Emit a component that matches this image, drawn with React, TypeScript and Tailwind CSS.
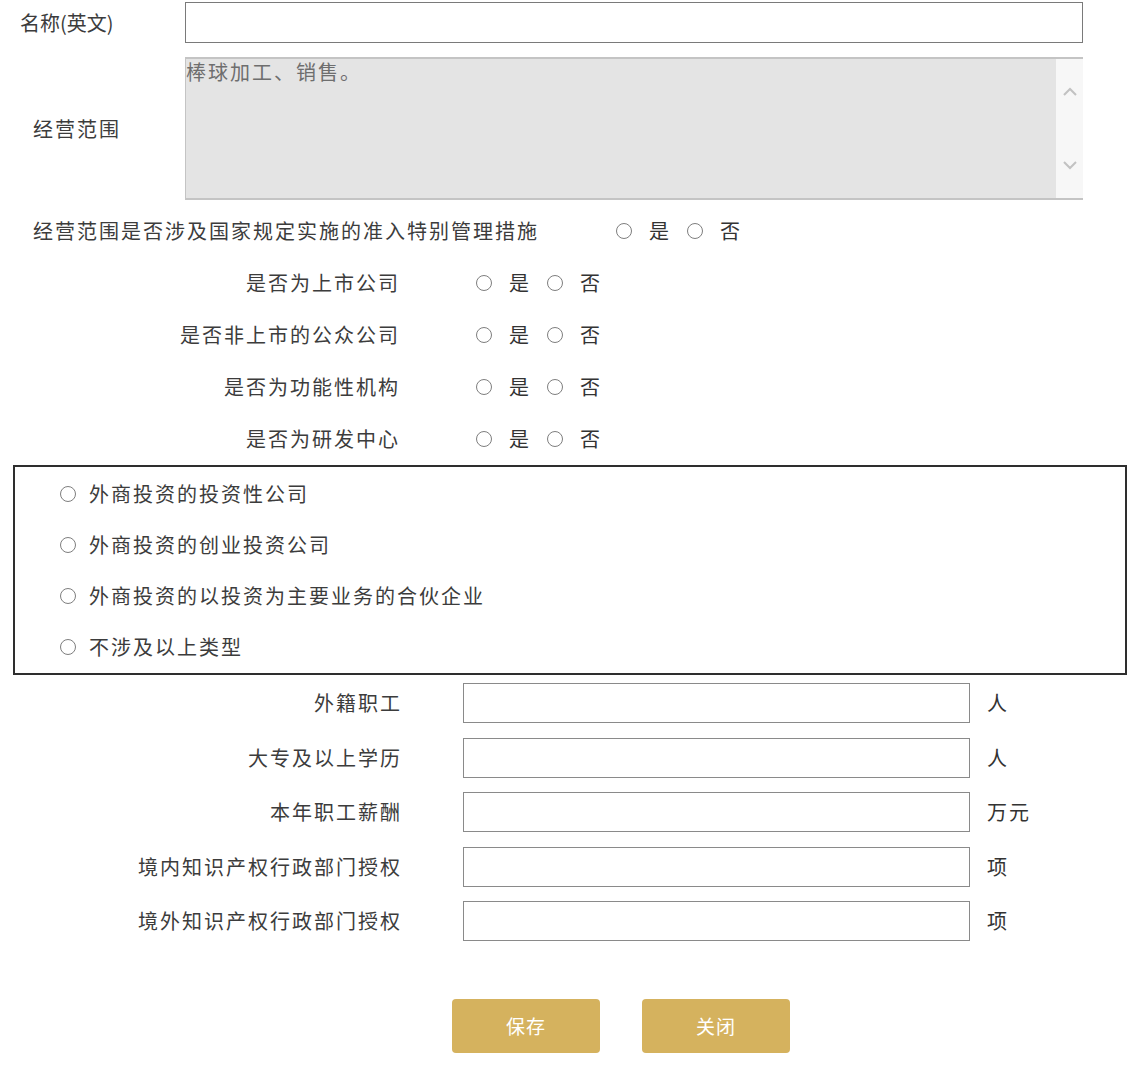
import React from 'react';

const yesNoRows = ['是否为上市公司', '是否非上市的公众公司', '是否为功能性机构', '是否为研发中心'];

const investTypes = [
  '外商投资的投资性公司',
  '外商投资的创业投资公司',
  '外商投资的以投资为主要业务的合伙企业',
  '不涉及以上类型',
];

const countRows = [
  { label: '外籍职工', unit: '人' },
  { label: '大专及以上学历', unit: '人' },
  { label: '本年职工薪酬', unit: '万元' },
  { label: '境内知识产权行政部门授权', unit: '项' },
  { label: '境外知识产权行政部门授权', unit: '项' },
];

const Radio: React.FC = () => (
  <span className="inline-block h-[16px] w-[16px] shrink-0 rounded-full border-[1.5px] border-[#7e7e7e] bg-white" />
);

const YesNo: React.FC = () => (
  <div className="flex items-center tracking-[0px]">
    <Radio />
    <span className="ml-[17px] text-[20px] text-[#333]">是</span>
    <span className="ml-[18px] flex">
      <Radio />
    </span>
    <span className="ml-[17px] text-[20px] text-[#333]">否</span>
  </div>
);

const App: React.FC = () => {
  return (
    <div
      className="w-[1130px] bg-white pb-[33px] text-[20px] tracking-[2px] text-[#3c3c3c]"
      style={{ fontFamily: "'Noto Sans CJK SC', 'Noto Sans', sans-serif" }}
    >
      {/* 名称 */}
      <div className="flex h-[43px] items-center pt-[2px]">
        <div className="w-[185px] pl-[20px] tracking-[0px]">名称(英文)</div>
        <div className="h-[41px] w-[898px] border border-[#7a7a7a] bg-white" />
      </div>

      {/* 经营范围 */}
      <div className="mt-[14px] flex h-[143px]">
        <div className="flex w-[185px] items-center pl-[33px]">经营范围</div>
        <div className="flex w-[898px] border-y-[2px] border-l border-[#c4c4c4] bg-[#e4e4e4]">
          <div className="flex-1 pt-px leading-[24px] text-[#6e6e6e]">棒球加工、销售。</div>
          <div className="flex w-[27px] flex-col items-center justify-between bg-[#f7f7f7] py-[28px]">
            <svg width="14" height="9" viewBox="0 0 14 9" fill="none" stroke="#c2c2c2" strokeWidth="2">
              <path d="M1 8l6-6 6 6" />
            </svg>
            <svg width="14" height="9" viewBox="0 0 14 9" fill="none" stroke="#c2c2c2" strokeWidth="2">
              <path d="M1 1l6 6 6-6" />
            </svg>
          </div>
        </div>
      </div>

      {/* 特别管理措施 */}
      <div className="mt-[5px] flex h-[52px] items-center">
        <div className="w-[616px] pl-[33px] tracking-[2px]">经营范围是否涉及国家规定实施的准入特别管理措施</div>
        <YesNo />
      </div>

      {yesNoRows.map((label) => (
        <div key={label} className="flex h-[52px] items-center">
          <div className="w-[400px] text-right">{label}</div>
          <div className="ml-[76px]">
            <YesNo />
          </div>
        </div>
      ))}

      {/* 投资类型 */}
      <div className="ml-[13px] w-[1114px] border-2 border-[#2e2e2e] py-px">
        {investTypes.map((t) => (
          <div key={t} className="flex h-[51px] items-center pl-[45px]">
            <Radio />
            <span className="ml-[13px]">{t}</span>
          </div>
        ))}
      </div>

      {/* 数量 */}
      <div className="mt-[8px] flex flex-col gap-[14.5px]">
        {countRows.map((r) => (
          <div key={r.label} className="flex h-[40px] items-center">
            <div className="w-[402px] text-right">{r.label}</div>
            <div className="ml-[61px] h-[40px] w-[507px] border border-[#8a8a8a] bg-white" />
            <div className="ml-[17px] text-[#333]">{r.unit}</div>
          </div>
        ))}
      </div>

      {/* 按钮 */}
      <div className="mt-[58px] flex gap-[42px] pl-[452px]">
        <button className="h-[54px] w-[148px] rounded-[4px] bg-[#d5b25e] text-[19px] tracking-[1px] text-white">
          保存
        </button>
        <button className="h-[54px] w-[148px] rounded-[4px] bg-[#d5b25e] text-[19px] tracking-[1px] text-white">
          关闭
        </button>
      </div>
    </div>
  );
};

export default App;
